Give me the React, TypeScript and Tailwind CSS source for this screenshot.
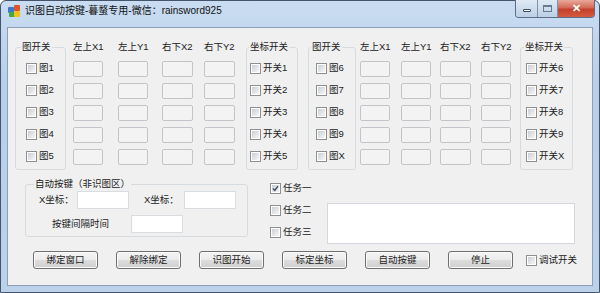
import React from "react";

function Box({ checked }: { checked?: boolean }) {
  return (
    <span className="flex h-[11px] w-[11px] shrink-0 items-center justify-center border border-[#8e8f8f] bg-white p-[1px]">
      <span className="relative h-full w-full bg-[linear-gradient(135deg,#cbcfd5,#f6f6f6)]">
        {checked && (
          <svg viewBox="0 0 7 7" className="absolute inset-0 h-full w-full">
            <path d="M1 3.6 L2.8 5.4 L6 1.2" fill="none" stroke="#3b4a5e" strokeWidth="1.4" />
          </svg>
        )}
      </span>
    </span>
  );
}

function Check({ label, checked, h = "h-[22px]" }: { label: string; checked?: boolean; h?: string }) {
  return (
    <div className={`flex ${h} items-center gap-[2px] whitespace-nowrap`}>
      <Box checked={checked} />
      <span>{label}</span>
    </div>
  );
}

function Column({ title, w, ml }: { title: string; w: string; ml: string }) {
  return (
    <div className={`flex flex-col ${w} ${ml}`}>
      <div className="h-[14px] whitespace-nowrap leading-[14px]">{title}</div>
      <div className="mt-[7px] flex flex-col gap-[6px]">
        {[0, 1, 2, 3, 4].map((i) => (
          <div key={i} className="h-[16px] rounded-[2px] border border-[#c2c4c8] bg-[#f3f3f3]" />
        ))}
      </div>
    </div>
  );
}

// group box: legend sits on the top border, items padded inside
function Group({
  title,
  items,
  cls,
  pad,
  legendCls,
}: {
  title: string;
  items: string[];
  cls: string;
  pad: string;
  legendCls: string;
}) {
  return (
    <fieldset className={`rounded-[3px] border border-[#d6dbe0] pt-[3px] pb-[2px] ${cls}`}>
      <legend className={`px-[1px] leading-[14px] ${legendCls}`}>{title}</legend>
      <div className={pad}>
        {items.map((t) => (
          <Check key={t} label={t} />
        ))}
      </div>
    </fieldset>
  );
}

function Btn({ label }: { label: string }) {
  return (
    <div className="flex h-[18px] w-[65px] items-center justify-center rounded-[3px] border border-[#707070] bg-[linear-gradient(180deg,#f4f4f4_0%,#ebebeb_50%,#dddddd_50%,#cfcfcf_100%)] text-[#222] shadow-[inset_0_0_0_1px_#fafafa]">
      {label}
    </div>
  );
}

function AppIcon() {
  return (
    <svg viewBox="0 0 14 14" className="h-[14px] w-[14px]">
      <rect x="1" y="3" width="6" height="6" rx="1" fill="#3a78d0" />
      <rect x="7" y="1" width="6" height="6" rx="1" fill="#e0542c" />
      <rect x="2" y="8" width="6" height="5" rx="1" fill="#48a83c" />
      <rect x="7" y="7" width="6" height="6" rx="1" fill="#f0c020" />
    </svg>
  );
}

export default function App() {
  return (
    <div className="h-[293px] w-[600px] overflow-hidden bg-white font-['Liberation_Sans','Noto_Sans_CJK_SC',sans-serif] text-[9.5px] text-[#1a1a1a]">
      <div className="flex h-full w-full flex-col rounded-t-[6px] border border-[#44546a] bg-[linear-gradient(180deg,#c9dcf1_0%,#b7cfea_30%,#bcd2eb_100%)] px-[6px] pb-[6px]">
        <div className="flex h-[26px] items-start">
          <div className="flex items-center gap-[4px] pt-[3px]">
            <AppIcon />
            <span className="text-[10px] leading-[14px] text-[#111]">识图自动按键-暮蝥专用-微信：rainsword925</span>
          </div>
          <div className="-mt-[1px] ml-auto mr-[-2px] flex h-[18px] overflow-hidden rounded-b-[4px] border border-t-0 border-[#5b6e86]">
            <div className="flex w-[22px] items-end justify-center border-r border-[#7f93ab] bg-[linear-gradient(180deg,#dfe9f5,#bccfe6)] pb-[5px]">
              <span className="h-[3px] w-[8px] rounded-[1px] border border-[#3d4b5c] bg-white" />
            </div>
            <div className="flex w-[20px] items-center justify-center border-r border-[#7f93ab] bg-[linear-gradient(180deg,#dfe9f5,#bccfe6)]">
              <span className="h-[7px] w-[9px] border border-t-2 border-[#6a7a8e] bg-transparent" />
            </div>
            <div className="flex w-[36px] items-center justify-center bg-[linear-gradient(180deg,#e9a99b_0%,#d46a57_45%,#c4402b_55%,#d35a40_100%)] text-[11px] font-bold leading-none text-white">
              ✕
            </div>
          </div>
        </div>

        <div className="flex flex-1 flex-col border border-[#8c9fb6] bg-[#f0f0f0]">
          <div className="flex items-start pt-[12px]">
            <Group
              title="图开关"
              items={["图1", "图2", "图3", "图4", "图5"]}
              cls="ml-[7px] w-[51px]"
              pad="pl-[10px]"
              legendCls="ml-[5px]"
            />
            <Column title="左上X1" w="w-[30px]" ml="ml-[7px]" />
            <Column title="左上Y1" w="w-[30px]" ml="ml-[15px]" />
            <Column title="右下X2" w="w-[31px]" ml="ml-[14px]" />
            <Column title="右下Y2" w="w-[31px]" ml="ml-[11px]" />
            <Group
              title="坐标开关"
              items={["开关1", "开关2", "开关3", "开关4", "开关5"]}
              cls="ml-[11px] w-[52px]"
              pad="pl-[3px]"
              legendCls="ml-[2px]"
            />
            <Group
              title="图开关"
              items={["图6", "图7", "图8", "图9", "图X"]}
              cls="ml-[10px] w-[48px]"
              pad="pl-[7px]"
              legendCls="ml-[2px]"
            />
            <Column title="左上X1" w="w-[30px]" ml="ml-[4px]" />
            <Column title="左上Y1" w="w-[30px]" ml="ml-[11px]" />
            <Column title="右下X2" w="w-[31px]" ml="ml-[9px]" />
            <Column title="右下Y2" w="w-[30px]" ml="ml-[10px]" />
            <Group
              title="坐标开关"
              items={["开关6", "开关7", "开关8", "开关9", "开关X"]}
              cls="ml-[9px] w-[53px]"
              pad="pl-[5px]"
              legendCls="ml-[3px]"
            />
          </div>

          <div className="mt-[7px] flex items-start">
            <fieldset className="ml-[17px] w-[223px] rounded-[3px] border border-[#d6dbe0] pb-[3px]">
              <legend className="ml-[8px] px-[1px] leading-[14px]">自动按键（非识图区）</legend>
              <div className="flex items-center pl-[13px]">
                <span className="w-[38px] whitespace-nowrap">X坐标：</span>
                <div className="h-[18px] w-[52px] border border-[#d9dde2] bg-white" />
                <span className="ml-[15px] w-[40px] whitespace-nowrap">X坐标：</span>
                <div className="h-[18px] w-[52px] border border-[#d9dde2] bg-white" />
              </div>
              <div className="mt-[6px] flex items-center pl-[26px]">
                <span className="w-[79px] whitespace-nowrap">按键间隔时间</span>
                <div className="h-[18px] w-[52px] border border-[#d9dde2] bg-white" />
              </div>
            </fieldset>
            <div className="ml-[22px] flex w-[57px] flex-col">
              <Check label="任务一" checked />
              <Check label="任务二" />
              <Check label="任务三" />
            </div>
            <div className="mt-[26px] h-[41px] w-[248px] border border-[#d2d8de] bg-white" />
          </div>

          <div className="mt-[7px] flex items-center gap-[18px] pl-[25px]">
            <Btn label="绑定窗口" />
            <Btn label="解除绑定" />
            <Btn label="识图开始" />
            <Btn label="标定坐标" />
            <Btn label="自动按键" />
            <Btn label="停止" />
            <div className="-ml-[5px]">
              <Check label="调试开关" h="h-[18px]" />
            </div>
          </div>
        </div>
      </div>
    </div>
  );
}
